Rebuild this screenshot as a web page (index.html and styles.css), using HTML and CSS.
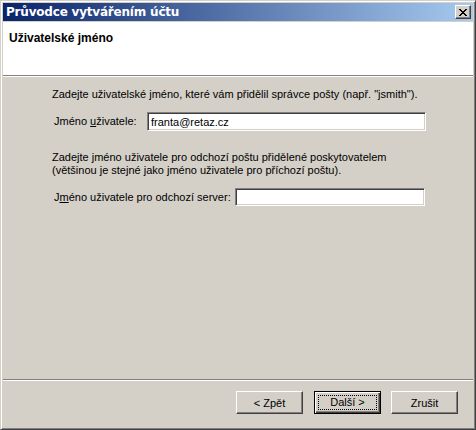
FILE: index.html
```
<!DOCTYPE html>
<html lang="cs">
<head>
    <meta charset="UTF-8">
    <title>Průvodce vytvářením účtu</title>
    <link rel="stylesheet" href="styles.css">
</head>
<body>
<div class="window">
    <div class="titlebar">
        <span class="title">Průvodce vytvářením účtu</span>
        <span class="close">
            <svg width="8" height="7" viewBox="0 0 8 7">
                <path d="M0 0h2v1h1v1h2V1h1V0h2v1H7v1H6v1H5v1h1v1h1v1h1v1H6V6H5V5H3v1H2v1H0V6h1V5h1V4h1V3H2V2H1V1H0z" fill="#000"/>
            </svg>
        </span>
    </div>
    <div class="client">
        <div class="header">
            <h1>Uživatelské jméno</h1>
        </div>
        <div class="content">
            <p>Zadejte uživatelské jméno, které vám přidělil správce pošty (např. "jsmith").</p>
            <div class="field first">
                <label class="lbl-short">Jméno <u>u</u>živatele:</label>
                <input class="input-long" type="text" value="franta@retaz.cz">
            </div>
            <p class="second">Zadejte jméno uživatele pro odchozí poštu přidělené poskytovatelem<br>(většinou je stejné jako jméno uživatele pro příchozí poštu).</p>
            <div class="field">
                <label class="lbl-long">J<u>m</u>éno uživatele pro odchozí server:</label>
                <input class="input-short" type="text" value="">
            </div>
        </div>
        <div class="footer">
            <button class="btn">&lt; Zpět</button>
            <button class="btn default"><span class="focus">Další &gt;</span></button>
            <button class="btn">Zrušit</button>
        </div>
    </div>
</div>
</body>
</html>
```

FILE: styles.css
```
*{
    margin: 0;
    padding: 0;
    box-sizing: border-box;
}
body{
    font-family: "Liberation Sans", Arial, sans-serif;
    font-size: 11px;
    line-height: 13px;
    color: #000;
    background: #d4d0c8;
}
.window{
    width: 476px;
    height: 430px;
    display: flex;
    flex-direction: column;
    background: #d4d0c8;
    border: 1px solid;
    border-color: #d4d0c8 #404040 #404040 #d4d0c8;
    box-shadow: inset 1px 1px #fff, inset -1px -1px #808080;
    padding: 2px;
}
.titlebar{
    height: 18px;
    margin-bottom: 1px;
    display: flex;
    align-items: center;
    padding-left: 3px;
    padding-right: 2px;
    background: linear-gradient(to right, #0a246a, #a6caf0);
}
.title{
    flex: 1;
    color: #fff;
    font-family: "DejaVu Sans", sans-serif;
    font-size: 12px;
    font-weight: bold;
    letter-spacing: -0.2px;
}
.close{
    width: 16px;
    height: 14px;
    display: flex;
    align-items: center;
    justify-content: center;
    background: #d4d0c8;
    border: 1px solid;
    border-color: #fff #404040 #404040 #fff;
    box-shadow: inset -1px -1px #808080;
    padding-right: 1px;
}
.close svg{
    display: block;
}
.client{
    flex: 1;
    display: flex;
    flex-direction: column;
}
.header{
    height: 54px;
    background: #fff;
    border-bottom: 1px solid #808080;
    box-shadow: 0 1px #fff;
    padding: 9px 0 0 6px;
}
.header h1{
    font-size: 12px;
    line-height: 15px;
    font-weight: bold;
}
.content{
    flex: 1;
    padding: 12px 0 0 49px;
}
.field{
    display: flex;
    align-items: center;
    padding-left: 2px;
}
.field.first{
    margin: 11px 0 20px;
}
.field label{
    flex-shrink: 0;
}
.lbl-short{
    width: 93px;
}
.lbl-long{
    width: 181px;
}
.second{
    margin-bottom: 11px;
}
input{
    height: 19px;
    font-family: inherit;
    font-size: 11px;
    color: #000;
    background: #fff;
    border: 1px solid;
    border-color: #808080 #fff #fff #808080;
    box-shadow: inset 1px 1px #404040, inset -1px -1px #d4d0c8;
    padding: 0 3px;
    outline: none;
}
.input-long{
    width: 279px;
}
.input-short{
    width: 190px;
    height: 18px;
}
.footer{
    display: flex;
    justify-content: flex-end;
    padding: 11px 15px 13px 0;
    border-top: 1px solid #808080;
    box-shadow: inset 0 1px #fff;
}
.btn{
    width: 67px;
    height: 23px;
    margin-left: 10px;
    font-family: inherit;
    font-size: 11px;
    color: #000;
    background: #d4d0c8;
    border: 1px solid;
    border-color: #fff #404040 #404040 #fff;
    box-shadow: inset -1px -1px #808080;
}
.btn:first-child{
    margin-left: 0;
}
.btn.default{
    margin-left: 11px;
    border: 1px solid #000;
    box-shadow: inset 1px 1px #fff, inset -1px -1px #404040, inset -2px -2px #808080;
    padding: 3px;
}
.focus{
    display: block;
    height: 15px;
    line-height: 13px;
    border: 1px dotted #000;
}
```
